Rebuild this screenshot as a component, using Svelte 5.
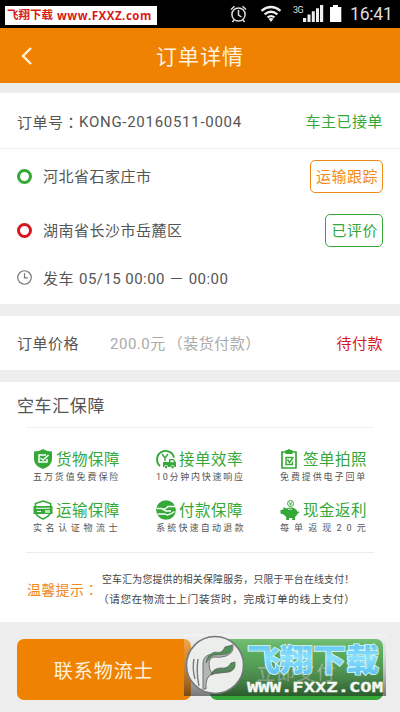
<script lang="ts">
  const stops = [
    { place: "河北省石家庄市", tone: "green", action: "运输跟踪", actionTone: "orange" },
    { place: "湖南省长沙市岳麓区", tone: "red", action: "已评价", actionTone: "green" },
  ];

  const guarantees = [
    { icon: "shield", title: "货物保障", note: "五万货值免费保险", spacing: 1.9 },
    { icon: "truck", title: "接单效率", note: "10分钟内快速响应", spacing: 1.75 },
    { icon: "clipboard", title: "签单拍照", note: "免费提供电子回单", spacing: 1.9 },
    { icon: "card", title: "运输保障", note: "实名认证物流士", spacing: 3.6 },
    { icon: "hand", title: "付款保障", note: "系统快速自动退款", spacing: 2.2 },
    { icon: "piggy", title: "现金返利", note: "每单返现20元", spacing: 5.1 },
  ];
</script>

{#snippet icon(name: string)}
  <svg class="icon" viewBox="0 0 20 20">
    {#if name === "shield"}
      <path d="M10 0Q14 2.5 19 2.5V10q0 7-9 10-9-3-9-10V2.5Q6 2.5 10 0z" fill="#35a838" />
      <path d="M13 6H6v7h8v-3M7.5 9l2.5 2 5.5-5" fill="none" stroke="#fff" stroke-width="1.5" />
    {:else if name === "truck"}
      <path d="M4 17A8.6 8.6 0 1 1 18 8.5" fill="none" stroke="#35a838" stroke-width="1.9" />
      <path d="M6 5l3 4 3-4M9 9v3" fill="none" stroke="#35a838" stroke-width="1.4" />
      <path d="M7 13h6V10h4.5l2.5 3.5V18H7z" fill="#35a838" />
      <path d="M14.5 11.3h2.5l1.2 2h-3.7z" fill="#fff" />
      <circle cx="10" cy="18" r="1.7" fill="#35a838" stroke="#fff" stroke-width=".7" />
      <circle cx="16.5" cy="18" r="1.7" fill="#35a838" stroke="#fff" stroke-width=".7" />
    {:else if name === "clipboard"}
      <path d="M2 3h14v16H2z" fill="none" stroke="#35a838" stroke-width="1.7" />
      <path d="M5.5 1h2q1.5-2 3 0h2v4h-7z" fill="#35a838" />
      <path d="M12 8.5H6v7h6.5v-3M7.5 10.5l2 3 4-5.5" fill="none" stroke="#35a838" stroke-width="1.4" />
    {:else if name === "card"}
      <path d="M10 1 17.6 3.5V11q0 5-7.6 8-7.6-3-7.6-8V3.5z" fill="none" stroke="#35a838" stroke-width="1.6" />
      <path d="M.5 6h19v8H.5z" fill="#35a838" />
      <path d="M3 8.3h14M4 11.5h4" stroke="#fff" stroke-width="1.1" />
      <path d="M12 10h5v3h-5z" fill="#b9e2ba" />
    {:else if name === "hand"}
      <circle cx="10" cy="10" r="9.8" fill="#35a838" />
      <path d="M19 6.5h-7L9 9H5.500M1 8.500h4l5 2.500h5M1.500 14h7l3 1q4-1 7-3.500" fill="none" stroke="#fff" stroke-width="1.3" />
    {:else}
      <circle cx="10.500" cy="3.500" r="3" fill="none" stroke="#35a838" stroke-width="1" />
      <path d="M9 2l1.500 2L12 2M10.500 4v1.500M9 4h3" stroke="#35a838" stroke-width=".7" fill="none" />
      <path d="M1.500 10l2-.8V7l3 1.500q5-2 9 .5 2 1.300 2 3l1.200-.8.7 1L17.300 14q-.6 2-2.300 3v3h-2.700v-2H9v2H6.200v-3L3.500 14.500l-3-1V10z" fill="#35a838" />
      <path d="M8 9.500q2-.8 4 0" stroke="#fff" stroke-width=".8" fill="none" />
    {/if}
  </svg>
{/snippet}

<div class="screen">
  <div class="status-bar">
    <svg class="status-icons" viewBox="0 0 145 28">
      <g fill="none" stroke="#ddd" stroke-width="1.5">
        <circle cx="18.5" cy="14.5" r="6.6" />
        <path d="M18.5 10v5l3 2M11 9.5l3.5-3.3M26 9.5l-3.5-3.3M14 20l-1.6 2M23 20l1.6 2" />
      </g>
      <g fill="none" stroke="#eee" stroke-width="2.3">
        <path d="M41.5 10.8q9.5-7.5 19 0M44.6 14.3q6.4-5 12.8 0M47.5 17.4q3.5-2.6 7 0" />
      </g>
      <path d="M48.5 18.8q2.5-1.8 5 0L51 22z" fill="#eee" />
      <text class="network" x="73" y="12.5">3G</text>
      <path d="M83 18h3.2v4H83zM87.5 14.5h3v7.5h-3zM91.8 11.3h3V22h-3zM96 8.3h3V22h-3zM100 5h3.2v17H100z" fill="#eee" />
      <path d="M110 7h3V5h5v2h3.3v15H110z" fill="#fff" />
    </svg>
    <span class="clock">16:41</span>
    <div class="site-tag"><b class="site-name">飞翔下载</b><b class="site-url">www.FXXZ.com</b></div>
  </div>

  <header class="header">
    <svg class="back" viewBox="0 0 12 18"><path d="M10 1 2 9l8 8" /></svg>
    <h1>订单详情</h1>
  </header>

  <section class="order">
    <div class="row order-number">
      <span class="label">订单号<span class="punct">：</span></span>
      <span class="number">KONG-20160511-0004</span>
      <span class="value green">车主已接单</span>
    </div>
    {#each stops as stop}
      <div class="row stop">
        <i class="dot {stop.tone}"></i>
        <span>{stop.place}</span>
        <button class="tag {stop.actionTone}">{stop.action}</button>
      </div>
    {/each}
    <div class="row departure">
      <svg class="time-icon" viewBox="0 0 16 16">
        <circle cx="8" cy="8" r="7.2" />
        <path d="M8 3.5V8.3h3.6" />
      </svg>
      <span>发车</span>
      <span class="time">05/15 00:00 － 00:00</span>
    </div>
  </section>

  <section class="row price">
    <span>订单价格</span>
    <span class="amount">200.0元<span class="paren">（装货付款）</span></span>
    <span class="value red">待付款</span>
  </section>

  <section class="guarantee">
    <h2>空车汇保障</h2>
    <div class="grid">
      {#each guarantees as item}
        <div class="item">
          <div class="item-title">{@render icon(item.icon)}<span>{item.title}</span></div>
          <div class="item-note" style="letter-spacing: {item.spacing}px">{item.note}</div>
        </div>
      {/each}
    </div>
    <div class="tips">
      <span class="tips-label">温馨提示<span class="punct">：</span></span>
      <div class="tips-text">
        <p>空车汇为您提供的相关保障服务，只限于平台在线支付！</p>
        <p class="second">（请您在物流士上门装货时，完成订单的线上支付）</p>
      </div>
    </div>
  </section>

  <footer class="footer">
    <button class="btn contact">联系物流士</button>
    <button class="btn pay">立即支付</button>
    <svg class="watermark" viewBox="0 0 202 64">
      <defs>
        <linearGradient id="shade" x2="0" y2="1">
          <stop offset="0" stop-color="#fff" stop-opacity=".35" />
          <stop offset=".35" stop-color="#aaa" stop-opacity=".3" />
          <stop offset="1" stop-color="#222" stop-opacity=".58" />
        </linearGradient>
        <linearGradient id="sky" x2="0" y2="1">
          <stop offset="0" stop-color="#45b4f0" />
          <stop offset=".5" stop-color="#8be0fb" />
          <stop offset="1" stop-color="#4fb8ec" />
        </linearGradient>
        <linearGradient id="metal" x2="0" y2="1">
          <stop offset="0" stop-color="#4c9b56" />
          <stop offset="1" stop-color="#5d795f" />
        </linearGradient>
      </defs>
      <path d="M0 0h202v62H0z" fill="url(#shade)" />
      <circle cx="31" cy="31" r="28.500" fill="#eceeec" stroke="#75777a" stroke-width="1.5" />
      <path d="M19 55V29q0-8 10-9 9 1 12-7l8-2q1 8-7 11-5 2-12 1-5 1-5 7 0 5 3 10-7 3-6 15z" fill="#b4b6b5" stroke="#666" stroke-width=".9" />
      <path d="M22 29q1-9 9-11 8 2 11-5l6-1q0 7-6 8-4 1-12 1-5 2-8 8z" fill="url(#metal)" stroke="#4d6a52" stroke-width=".6" />
      <path d="M27 41q2-7 10-7 7 1 10-5l4-1q1 8-6 10l-9 1q-5 0-9 2z" fill="url(#metal)" stroke="#555" stroke-width=".7" />
      <path d="M11 45Q8 34 10 25M15 52Q12 38 14 25" fill="none" stroke="#777" stroke-width="1.4" />
      <text class="mark-name" x="63" y="37" textLength="132" lengthAdjust="spacingAndGlyphs">飞翔下载</text>
      <text class="mark-url" x="63" y="57.5" textLength="136" lengthAdjust="spacingAndGlyphs">WWW.FXXZ.COM</text>
    </svg>
  </footer>
</div>

<style>
  :global(body) {
    background: #ededed;
  }

  .screen {
    width: 400px;
    height: 712px;
    overflow: hidden;
    display: flex;
    flex-direction: column;
    background: #ededed;
    color: #555;
    font-family: Roboto, "Noto Sans CJK SC", sans-serif;
    font-size: 15px;
    letter-spacing: 0.5px;
    line-height: 1;
    white-space: nowrap;
  }

  button {
    font: inherit;
    letter-spacing: inherit;
    padding: 0;
  }

  .punct {
    font-family: "Noto Sans CJK TC", sans-serif;
  }

  .green {
    color: #35a838;
  }

  .orange {
    color: #f08a1d;
  }

  .red {
    color: #d7191f;
  }

  .status-bar {
    position: relative;
    display: flex;
    align-items: center;
    height: 28px;
    flex: none;
    padding-left: 220px;
    background: #000;
  }

  .status-icons {
    width: 145px;
    height: 28px;
    flex: none;
    margin-right: -15px;
  }

  .network {
    font: 9px Roboto, sans-serif;
    letter-spacing: -0.5px;
    fill: #ddd;
  }

  .clock {
    padding-top: 2px;
    color: #ddd;
    font-size: 17.5px;
    letter-spacing: -0.2px;
  }

  .site-tag {
    position: absolute;
    left: 5px;
    top: 6px;
    width: 152px;
    height: 19px;
    display: flex;
    align-items: center;
    gap: 4px;
    padding-left: 2px;
    box-sizing: border-box;
    background: #fff;
    color: #d51b20;
    letter-spacing: 0;
  }

  .site-name {
    font-size: 11.5px;
  }

  .site-url {
    font: bold 11.5px "Open Sans", sans-serif;
    letter-spacing: 0.5px;
  }

  .header {
    display: flex;
    align-items: center;
    height: 55px;
    flex: none;
    background: #ef8200;
    color: #fff2df;
  }

  .back {
    width: 12px;
    height: 18px;
    margin-left: 21px;
    fill: none;
    stroke: #fff2df;
    stroke-width: 2.4;
  }

  h1 {
    margin: 0 0 0 123px;
    padding-top: 3px;
    font-size: 21px;
    font-weight: 400;
    letter-spacing: 1px;
  }

  section {
    background: #fff;
  }

  .row {
    display: flex;
    align-items: center;
    padding: 0 17px;
  }

  .row > span {
    padding-top: 3px;
  }

  .order {
    height: 211px;
    flex: none;
    margin-top: 10px;
  }

  .order-number {
    height: 55px;
    border-bottom: 1px solid #ededed;
  }

  .number {
    letter-spacing: 0.72px;
  }

  .value {
    margin-left: auto;
  }

  .stop {
    height: 54px;
  }

  .dot {
    width: 15px;
    height: 15px;
    box-sizing: border-box;
    border: 3px solid currentColor;
    border-radius: 50%;
    margin-right: 11px;
  }

  .tag {
    height: 33px;
    margin-left: auto;
    padding: 3px 4px 0 5px;
    background: #fff;
    border: 1px solid currentColor;
    border-radius: 5px;
  }

  .departure {
    height: 41px;
  }

  .time-icon {
    width: 15px;
    height: 15px;
    margin-right: 11px;
    fill: none;
    stroke: #777;
    stroke-width: 1.3;
  }

  .time {
    margin-left: 5px;
    letter-spacing: 0.45px;
  }

  .price {
    height: 54px;
    flex: none;
    margin-top: 12px;
  }

  .amount {
    margin-left: 31px;
    color: #aaa;
  }

  .paren {
    margin-left: 2px;
  }

  .guarantee {
    height: 240px;
    flex: none;
    margin-top: 12px;
    overflow: hidden;
  }

  h2 {
    margin: 15px 0 0 17px;
    font-size: 17px;
    font-weight: 400;
    letter-spacing: 0.6px;
    line-height: 19px;
  }

  .grid {
    display: grid;
    grid-template-columns: 123px 124px 110px;
    grid-template-rows: 51px 51px;
    height: 126px;
    margin: 11px 26px 0;
    padding: 21px 0 0 7px;
    box-sizing: border-box;
    border-top: 1px solid #f0f0f0;
    border-bottom: 1px solid #ededed;
  }

  .item-title {
    display: flex;
    align-items: center;
    height: 20px;
    gap: 3px;
    color: #35a838;
    font-size: 15.5px;
  }

  .item-title span {
    padding-top: 4px;
  }

  .icon {
    width: 20px;
    height: 20px;
  }

  .item-note {
    margin-top: 2px;
    font-size: 9px;
    line-height: 13px;
  }

  .tips {
    display: flex;
    align-items: center;
    height: 69px;
    padding-left: 27px;
    padding-top: 4px;
    box-sizing: border-box;
  }

  .tips-label {
    width: 75px;
    font-size: 14px;
    letter-spacing: 0.3px;
    color: #f08a1d;
  }

  .tips-text {
    font-size: 9.9px;
    letter-spacing: 0.22px;
    color: #444;
  }

  p {
    margin: 0;
    line-height: 20px;
  }

  .second {
    font-size: 10.7px;
    letter-spacing: 0.5px;
    margin-left: -4px;
  }

  .footer {
    position: relative;
    display: flex;
    gap: 19px;
    padding: 17px;
  }

  .btn {
    width: 174px;
    height: 61px;
    padding-top: 4px;
    border: 0;
    border-radius: 7px;
    color: #fff2df;
    font-size: 19px;
    letter-spacing: 1px;
  }

  .contact {
    background: #ef8200;
  }

  .pay {
    padding-top: 8px;
    background: #35a838;
    color: #a9d9a6;
  }

  .watermark {
    position: absolute;
    left: 184px;
    top: 12px;
    width: 202px;
    height: 64px;
  }

  .mark-name {
    font: 900 31px "Noto Sans CJK SC", sans-serif;
    letter-spacing: 0;
    fill: url(#sky);
    stroke: #dff6ff;
    stroke-width: 1.6;
    paint-order: stroke;
  }

  .mark-url {
    font: bold 13.5px "DejaVu Sans Mono", monospace;
    letter-spacing: 0;
    fill: #f4f7f4;
    stroke: #f4f7f4;
    stroke-width: 0.3;
  }
</style>
